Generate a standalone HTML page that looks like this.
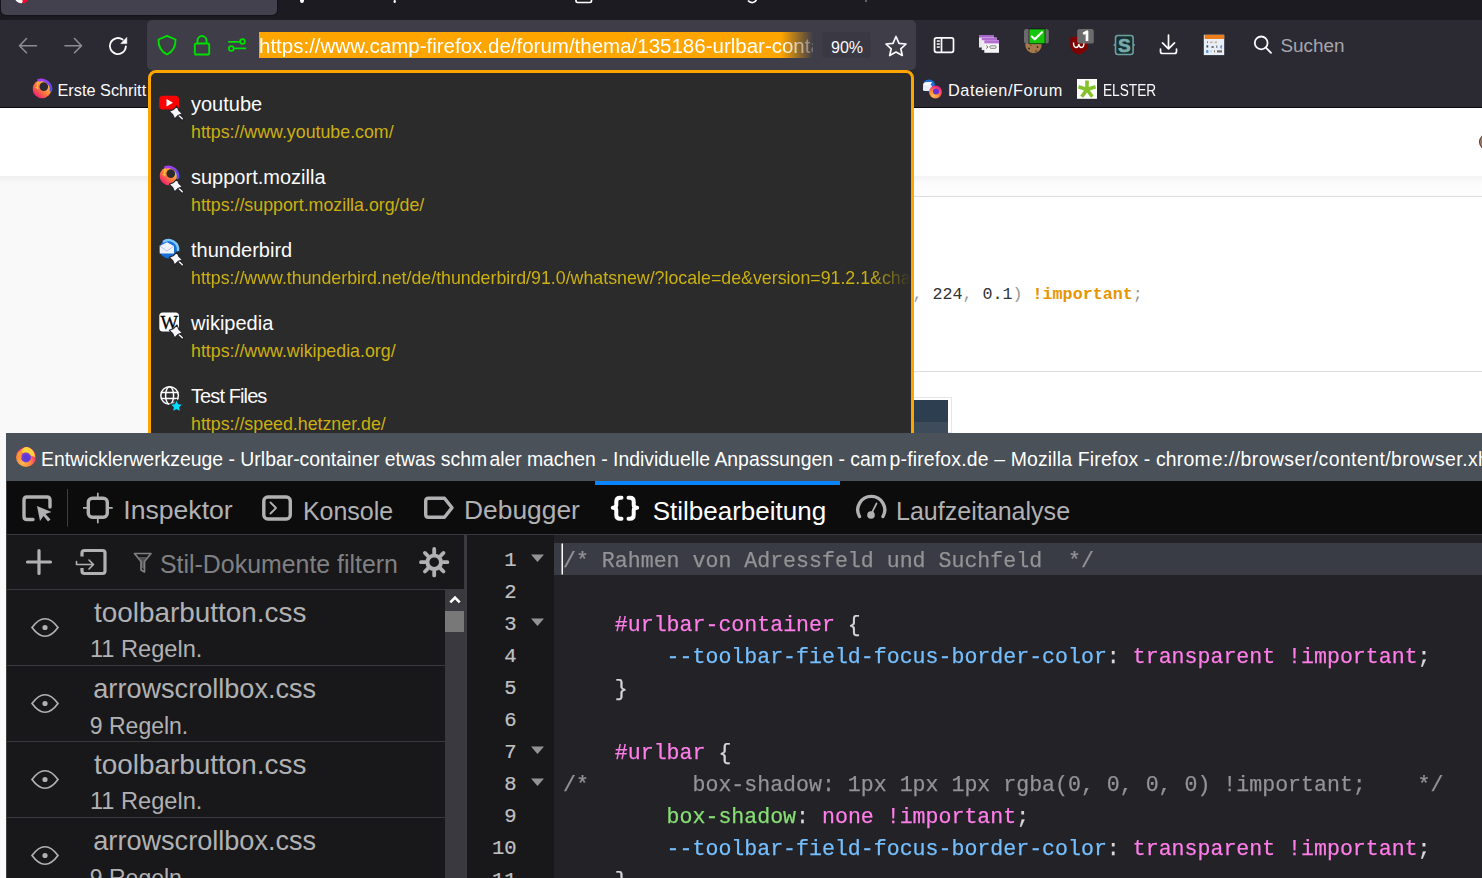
<!DOCTYPE html>
<html><head><meta charset="utf-8">
<style>
*{margin:0;padding:0;box-sizing:border-box}
html,body{width:1482px;height:878px;overflow:hidden;background:#fff;font-family:"Liberation Sans",sans-serif}
.a{position:absolute}
.t{position:absolute;white-space:pre;line-height:1}
.m{font-family:"Liberation Mono",monospace}
svg{position:absolute;overflow:visible}
</style></head><body>

<!-- TAB STRIP -->
<div class="a" style="left:0;top:0;width:1482px;height:20px;background:#1c1b22"></div>
<div class="a" style="left:1px;top:-10px;width:276px;height:25px;background:#42414d;border-radius:5px;box-shadow:0 0 1px 1px #141319"></div>


<svg style="left:0;top:0" width="1482" height="20" viewBox="0 0 1482 20">
 <ellipse cx="21.2" cy="-3.5" rx="6.6" ry="6.8" fill="#fff"/>
 <path d="M21.5 -10.3A6.6 6.8 0 0 1 21.5 3.3L23 2Q26 -3 23 -10Z" fill="#f00c2c"/>
 <path d="M21.2 -10.3A6.6 6.8 0 0 1 27.8 -3.5A6.6 6.8 0 0 1 21.2 3.3" fill="#f00c2c" transform="translate(1.3,0)"/>
 <ellipse cx="302" cy="0.5" rx="2" ry="2.6" fill="#fff"/>
 <rect x="393.6" y="0" width="2.2" height="3" rx="1" fill="#fff"/>
 <path d="M576 -3V1Q576 2.5 577.5 2.5H590Q591.5 2.5 591.5 1V-3" fill="none" stroke="#fff" stroke-width="1.7"/>
 <path d="M748 0.5Q750 3 753 2.5Q756 2 756.5 -1" fill="none" stroke="#fff" stroke-width="1.7"/>
 <rect x="865.5" y="0" width="1" height="2" fill="#aaa"/>
</svg>

<!-- NAV BAR -->
<div class="a" style="left:0;top:20px;width:1482px;height:88px;background:#2b2a33"></div>
<div class="a" style="left:0;top:107px;width:1482px;height:1px;background:#0b0b0f"></div>

<!-- PAGE -->
<div class="a" style="left:0;top:108px;width:1482px;height:68px;background:#fff"></div>
<div class="a" style="left:0;top:176px;width:1482px;height:702px;background:#f9f9f9"></div>
<div class="a" style="left:0;top:176px;width:1482px;height:8px;background:linear-gradient(#efefef,#f9f9f9)"></div>


<!-- PAGE CONTENT -->
<div class="a" style="left:600px;top:176px;width:882px;height:20px;background:linear-gradient(#f3f3f3,#f9f9f9 5px,#fdfdfd 10px)"></div><div class="a" style="left:600px;top:196px;width:882px;height:237px;background:#fff;border-top:1px solid #dcdce0"></div>
<div class="a" style="left:600px;top:371px;width:882px;height:1px;background:#dcdce0"></div>
<div class="a" style="left:600px;top:397px;width:352px;height:36px;background:#fff;border:1px solid #e6e6ee"></div>
<div class="a" style="left:600px;top:400px;width:348px;height:33px;background:linear-gradient(#2c3e50 0,#2c3e50 22px,#3d4b5b 22px)"></div>
<div class="a m" style="left:712.1px;top:284.6px;font-size:16.7px;line-height:20px;white-space:pre;color:#333">color: rgba(224<span style="color:#999">,</span> 224<span style="color:#999">,</span> 224<span style="color:#999">,</span> 0.1<span style="color:#999">)</span> <b style="color:#e69500">!important</b><span style="color:#999">;</span></div>
<div class="a" style="left:1478.5px;top:132.5px;width:19px;height:18px;border-radius:50%;background:#9a7a6a;border:1.5px solid #5a3a30"></div>

<!-- URL BAR -->
<div class="a" style="left:147px;top:20px;width:769px;height:50px;background:#3e3d48;border-radius:5px"></div>

<!-- POPUP -->
<div class="a" style="left:148px;top:70px;width:766px;height:380px;background:#2b2b2b;border:3px solid #ffa500;border-radius:8px"></div>


<!-- NAV ICONS -->
<svg style="left:0;top:0" width="1482" height="108" viewBox="0 0 1482 108">
 <g fill="none" stroke="#8c8c93" stroke-width="1.6" stroke-linecap="round" stroke-linejoin="round">
  <path d="M19.5 45.8H36.5M26.5 38.5L19.5 45.8L26.5 52.8"/>
  <path d="M65 45.8H81.5M74.5 38.5L81.5 45.8L74.5 52.8"/>
 </g>
 <g fill="none" stroke="#fbfbfe" stroke-width="1.8" stroke-linecap="round">
  <path d="M125.85 46.5A8 8 0 1 1 122.6 39.6"/>
 </g>
 <path d="M126.8 37.4L126.8 43.6L120.8 43.6Z" fill="#fbfbfe" stroke="#fbfbfe" stroke-width="0.6" stroke-linejoin="round"/>
 <g fill="none" stroke="#00e000" stroke-width="1.9" stroke-linejoin="round">
  <path d="M167 35.8L158.5 39.5C158.3 46 161 51.5 167 54.5C173 51.5 175.7 46 175.5 39.5Z"/>
  <path d="M197.5 43V40.5A4.5 4.5 0 0 1 206.5 40.5V43"/>
  <rect x="194.8" y="43.5" width="14.4" height="11" rx="1.6"/>
 </g>
 <g fill="none" stroke="#00e000" stroke-width="1.7" stroke-linecap="round">
  <path d="M228.8 41.8H239M234.3 48.3H245.5"/>
  <circle cx="242.5" cy="41.5" r="2.4"/>
  <circle cx="231.3" cy="48.5" r="2.4"/>
 </g>
</svg>


<!-- URL TEXT -->
<div class="a" style="left:259px;top:32px;width:554px;height:26px;background:linear-gradient(90deg,#ffa500 0,#ffa500 522px,rgba(255,165,0,0) 554px)"></div>
<div class="t" style="left:259px;top:36.2px;font-size:20.5px;color:#fff;width:554px;overflow:hidden;-webkit-mask-image:linear-gradient(90deg,#000 0,#000 522px,rgba(0,0,0,.25) 554px)">https://www.camp-firefox.de/forum/thema/135186-urlbar-container</div>
<div class="a" style="left:822px;top:32px;width:49px;height:26px;background:#393843;border-radius:4px"></div>
<div class="t" style="left:831px;top:39.5px;font-size:16px;color:#fbfbfe">90%</div>
<svg style="left:0;top:0" width="1482" height="108" viewBox="0 0 1482 108">
 <path d="M896 36.5L899 43.3L906 44L900.8 48.8L902.3 55.5L896 52L889.7 55.5L891.2 48.8L886 44L893 43.3Z" fill="none" stroke="#fbfbfe" stroke-width="1.7" stroke-linejoin="round"/>
 <g fill="none" stroke="#fbfbfe" stroke-width="1.7">
  <rect x="934.5" y="37.8" width="19" height="14.5" rx="2"/>
  <path d="M941.5 38V52"/>
 </g>
 <g fill="#fbfbfe"><rect x="936.8" y="40.3" width="3" height="1.5"/><rect x="936.8" y="43.3" width="3" height="1.5"/><rect x="936.8" y="46.3" width="3" height="1.5"/></g>
 <!-- download -->
 <g fill="none" stroke="#fbfbfe" stroke-width="1.7" stroke-linecap="round" stroke-linejoin="round">
  <path d="M1168.5 35V48.5M1162.5 42.8L1168.5 48.8L1174.5 42.8"/>
  <path d="M1160.5 49V51.5Q1160.5 53.5 1162.5 53.5H1174.5Q1176.5 53.5 1176.5 51.5V49"/>
 </g>
 <!-- search -->
 <g fill="none" stroke="#fbfbfe" stroke-width="1.8" stroke-linecap="round">
  <circle cx="1261.2" cy="42.9" r="6.4"/>
  <path d="M1265.9 47.6L1271 52.8"/>
 </g>
</svg>
<div class="t" style="left:1280.5px;top:37.3px;font-size:18.9px;color:#a6a6ac">Suchen</div>


<!-- EXTENSION ICONS -->
<svg style="left:0;top:0" width="1482" height="108" viewBox="0 0 1482 108">
 <defs>
  <radialGradient id="ffg" cx="0.35" cy="0.75" r="0.8"><stop offset="0" stop-color="#ffbd4f"/><stop offset="0.45" stop-color="#ff8a3d"/><stop offset="0.8" stop-color="#f5366e"/><stop offset="1" stop-color="#e31587"/></radialGradient>
  <linearGradient id="ffl" x1="0.15" y1="0.9" x2="0.85" y2="0.1"><stop offset="0" stop-color="#f01a76"/><stop offset="0.45" stop-color="#ff7a3d"/><stop offset="1" stop-color="#ffd93b"/></linearGradient><linearGradient id="ffp2" x1="0" y1="0" x2="0.3" y2="1"><stop offset="0" stop-color="#a83df5"/><stop offset="1" stop-color="#4d4cf0"/></linearGradient>
  <linearGradient id="ffp" x1="0" y1="0" x2="1" y2="1"><stop offset="0" stop-color="#9059ff"/><stop offset="1" stop-color="#592acb"/></linearGradient>
 </defs>
 <!-- windows -->
 <g>
  <rect x="979" y="35" width="15" height="12.5" fill="#e8e8e8"/><rect x="979" y="35" width="15" height="2.6" fill="#a865c9"/>
  <rect x="981.7" y="37.6" width="15" height="12.5" fill="#ececec"/><rect x="981.7" y="37.6" width="15" height="2.6" fill="#b06ad0"/>
  <rect x="984.3" y="40.2" width="14.7" height="12.6" fill="#f6f6f6"/><rect x="984.3" y="40.2" width="14.7" height="3.2" fill="#b36fd3"/>
  <path d="M986.2 45.5L988 47L986.2 48.5" fill="none" stroke="#666" stroke-width="0.9"/><rect x="990" y="45.8" width="6" height="2.5" rx="0.8" fill="none" stroke="#777" stroke-width="0.9"/>
 </g>
 <!-- cookie -->
 <circle cx="1033.5" cy="45" r="8.2" fill="#a5794c"/>
 <g fill="#3b2a1a"><circle cx="1029" cy="48.5" r="1"/><circle cx="1037.5" cy="47" r="0.9"/><circle cx="1036" cy="51" r="0.8"/><circle cx="1031" cy="45.5" r="0.6"/></g>
 <rect x="1024" y="29" width="24.8" height="14.6" rx="2.5" fill="#6b6b6b"/>
 <rect x="1029" y="29" width="16" height="14.8" fill="#16c60c" stroke="#000" stroke-width="0.6"/>
 <path d="M1031.8 36.5L1034.8 39.3L1042 32.3" fill="none" stroke="#fff" stroke-width="2.2" stroke-linecap="round" stroke-linejoin="round"/>
 <!-- ublock -->
 <path d="M1070.3 37.5L1078.8 36.3L1087.5 37.5V46Q1087.5 51.5 1078.8 54.8Q1070.3 51.5 1070.3 46Z" fill="#800000"/>
 <path d="M1073.5 42.5Q1073.5 47.5 1076.2 47.5Q1078.5 47.5 1078.8 44Q1079 47.5 1081.5 47.5Q1084 47.5 1084 42.5" fill="none" stroke="#fff" stroke-width="1.4"/>
 <rect x="1077.2" y="29" width="16.6" height="14.6" rx="2.2" fill="#6b6b6b"/>
 <path d="M1083.2 33.8L1087 31.6V41" fill="none" stroke="#fff" stroke-width="2.7" stroke-linejoin="round"/>
 <!-- stylus -->
 <rect x="1115.5" y="35.5" width="17.6" height="19" rx="2.5" fill="#17302f" stroke="#6f9ea0" stroke-width="1.6"/>
 <circle cx="1114.5" cy="45" r="1" fill="#6f9ea0"/><circle cx="1134" cy="45" r="1" fill="#6f9ea0"/>
 <text x="1124.3" y="52.3" font-family="Liberation Sans" font-weight="bold" font-size="19" fill="#79a9ad" text-anchor="middle" stroke="#79a9ad" stroke-width="0.6">S</text>
 <!-- grid calendar -->
 <rect x="1203.8" y="34.8" width="20.4" height="20.3" fill="#e6effa"/>
 <rect x="1204.6" y="34.8" width="19.6" height="4.2" fill="#ec7d1c"/>
 <g fill="#c9a27a" opacity=".8"><rect x="1210" y="41.5" width="2.6" height="1.6"/><rect x="1214.5" y="41.5" width="2.6" height="1.6"/></g>
 <rect x="1207" y="41.3" width="1" height="1.8" fill="#4b7fd6"/>
 <g fill="#444"><rect x="1206.5" y="45.3" width="1.7" height="2.2"/><rect x="1211.5" y="46.3" width="2.2" height="1.4"/></g>
 <rect x="1216" y="45.5" width="1.4" height="2.4" fill="#888"/>
 <path d="M1222 45.5Q1220 46.5 1221.5 48.5" fill="none" stroke="#3d73c9" stroke-width="1.2"/>
 <rect x="1206.2" y="50" width="2.2" height="3" fill="#5b95d6"/><rect x="1210" y="50.5" width="2" height="1.6" fill="#b8d4f0"/>
 <rect x="1214" y="50.3" width="1" height="2" fill="#8a6b4a"/><rect x="1217" y="50.3" width="5" height="2.2" fill="#7a6a5a"/>

 <!-- bookmark bar icons -->
 <g transform="translate(42,89)"><circle r="9.3" fill="url(#ffl)"/><path d="M-4.5 -8.2A9.6 9.6 0 0 1 8.8 2.5" fill="none" stroke="url(#ffp2)" stroke-width="2.6"/><circle cx="1.8" cy="-2.4" r="4.3" fill="#2b2a33"/><path d="M-3.2 -7.3Q-5.5 -4 -4 0Q-5.5 -2.5 -6.3 -1" fill="none" stroke="#ffbf40" stroke-width="1.2"/></g>
 <g transform="translate(932,89)">
  <circle cx="-3" cy="-3.5" r="6" fill="#1d6fd9"/><path d="M-9 -3.5Q-9 -7 -5 -7H0L-3 -1Z" fill="#fff"/>
  <rect x="-9" y="-4" width="9" height="6" rx="1.5" fill="#e8eefa"/>
  <circle cx="3.5" cy="3" r="6.5" fill="url(#ffg)"/>
  <circle cx="4" cy="2.5" r="3" fill="#6a2fd6"/>
 </g>
 <rect x="1077" y="79" width="20" height="19.8" fill="#fff"/>
 <path d="M1087.0 89.5L1087.00 80.50M1087.0 89.5L1095.56 86.72M1087.0 89.5L1092.29 96.78M1087.0 89.5L1081.71 96.78M1087.0 89.5L1078.44 86.72" stroke="#84c22b" stroke-width="3.6"/>
</svg>
<div class="t" style="left:57.5px;top:82px;font-size:16.3px;color:#fbfbfe;width:90px;overflow:hidden">Erste Schritt</div>
<div class="t" style="left:948px;top:82px;font-size:16.3px;color:#fbfbfe;letter-spacing:0.55px">Dateien/Forum</div>
<div class="t" style="left:1103px;top:82px;font-size:16.3px;color:#fbfbfe;transform:scaleX(.84);transform-origin:0 0">ELSTER</div>


<!-- POPUP ROWS -->
<div class="t" style="left:191px;top:93.57px;font-size:20px;color:#fbfbfe">youtube</div>
<div class="t" style="left:191px;top:123.83px;font-size:17.8px;color:#cbb011;">https://www.youtube.com/</div>
<div class="t" style="left:191px;top:166.57px;font-size:20px;color:#fbfbfe">support.mozilla</div>
<div class="t" style="left:191px;top:196.83px;font-size:17.8px;color:#cbb011;">https://support.mozilla.org/de/</div>
<div class="t" style="left:191px;top:239.57px;font-size:20px;color:#fbfbfe">thunderbird</div>
<div class="t" style="left:191px;top:269.83px;font-size:17.8px;color:#cbb011;width:720px;overflow:hidden;-webkit-mask-image:linear-gradient(90deg,#000 0,#000 680px,rgba(0,0,0,0) 720px);">https://www.thunderbird.net/de/thunderbird/91.0/whatsnew/?locale=de&amp;version=91.2.1&amp;channel=release</div>
<div class="t" style="left:191px;top:312.57px;font-size:20px;color:#fbfbfe">wikipedia</div>
<div class="t" style="left:191px;top:342.83px;font-size:17.8px;color:#cbb011;">https://www.wikipedia.org/</div>
<div class="t" style="left:191px;top:385.57px;font-size:20px;color:#fbfbfe;letter-spacing:-0.9px">Test Files</div>
<div class="t" style="left:191px;top:415.83px;font-size:17.8px;color:#cbb011;">https://speed.hetzner.de/</div>
<svg style="left:0;top:0" width="1482" height="440" viewBox="0 0 1482 440">
<rect x="159.2" y="95.8" width="19.8" height="13.8" rx="3.5" fill="#f00"/><path d="M166.5 99L173 102.7L166.5 106.4Z" fill="#fff"/>
<g><path d="M176.8 113.5L182.8 119.3" stroke="#23232a" stroke-width="3" stroke-linecap="round"/><path d="M176.8 113.5L182.3 118.8" stroke="#fff" stroke-width="1.3" stroke-linecap="round"/><path d="M176.95 106.00L178.83 110.38L182.30 113.65L177.92 115.53L174.65 119.00L172.77 114.62L169.30 111.35L173.68 109.47Z" fill="#f7f7fb" stroke="#23232a" stroke-width="1.1" stroke-linejoin="round"/></g>
<g transform="translate(169,176)"><circle r="9.3" fill="url(#ffl)"/><path d="M-4.5 -8.2A9.6 9.6 0 0 1 8.8 2.5" fill="none" stroke="url(#ffp2)" stroke-width="2.6"/><circle cx="1.8" cy="-2.4" r="4.3" fill="#2b2b2b"/><path d="M-3.2 -7.3Q-5.5 -4 -4 0Q-5.5 -2.5 -6.3 -1" fill="none" stroke="#ffbf40" stroke-width="1.2"/></g>
<g><path d="M176.8 186.5L182.8 192.3" stroke="#23232a" stroke-width="3" stroke-linecap="round"/><path d="M176.8 186.5L182.3 191.8" stroke="#fff" stroke-width="1.3" stroke-linecap="round"/><path d="M176.95 179.00L178.83 183.38L182.30 186.65L177.92 188.53L174.65 192.00L172.77 187.62L169.30 184.35L173.68 182.47Z" fill="#f7f7fb" stroke="#23232a" stroke-width="1.1" stroke-linejoin="round"/></g>
<g transform="translate(169,249)"><circle r="9.5" fill="#1a6fd6"/><path d="M-6 -7A9.5 9.5 0 0 1 9 2" fill="none" stroke="#7dc9ff" stroke-width="2.5"/><path d="M-9.3 -3L-2 -6.8L5 -3V4.5H-9.3Z" fill="#eef2fa"/><path d="M-9.3 -3L-2 2L5 -3" fill="none" stroke="#b9c6dc" stroke-width="1"/></g>
<g><path d="M176.8 259.5L182.8 265.3" stroke="#23232a" stroke-width="3" stroke-linecap="round"/><path d="M176.8 259.5L182.3 264.8" stroke="#fff" stroke-width="1.3" stroke-linecap="round"/><path d="M176.95 252.00L178.83 256.38L182.30 259.65L177.92 261.53L174.65 265.00L172.77 260.62L169.30 257.35L173.68 255.47Z" fill="#f7f7fb" stroke="#23232a" stroke-width="1.1" stroke-linejoin="round"/></g>
<rect x="159.3" y="312.5" width="19.7" height="19" rx="3.5" fill="#fff"/><text x="169.2" y="328.5" font-family="Liberation Serif" font-size="18.5" fill="#000" text-anchor="middle" stroke="#000" stroke-width="0.3">W</text>
<g><path d="M176.8 332.5L182.8 338.3" stroke="#23232a" stroke-width="3" stroke-linecap="round"/><path d="M176.8 332.5L182.3 337.8" stroke="#fff" stroke-width="1.3" stroke-linecap="round"/><path d="M176.95 325.00L178.83 329.38L182.30 332.65L177.92 334.53L174.65 338.00L172.77 333.62L169.30 330.35L173.68 328.47Z" fill="#f7f7fb" stroke="#23232a" stroke-width="1.1" stroke-linejoin="round"/></g>
<g fill="none" stroke="#fbfbfe" stroke-width="1.5"><circle cx="169.6" cy="395.5" r="8.8"/><ellipse cx="169.6" cy="395.5" rx="4" ry="8.8"/><path d="M160.8 392.5H178.4M160.8 398.5H178.4"/></g>
<path d="M176.5 399.5L178.6 403.7L183.2 404.3L179.8 407.5L180.7 412L176.5 409.8L172.3 412L173.2 407.5L169.8 404.3L174.4 403.7Z" fill="#00ddff" stroke="#2b2b2b" stroke-width="1.3" stroke-linejoin="round"/>
</svg>

<!-- DEVTOOLS -->
<div class="a" style="left:6px;top:433px;width:1476px;height:445px;background:#232327"></div>
<div class="a" style="left:6px;top:433px;width:1476px;height:48px;background:#4a5158"></div>
<div class="a" style="left:6px;top:481px;width:1476px;height:53px;background:#0c0c0d"></div>
<div class="a" style="left:6px;top:534px;width:1476px;height:1px;background:#38383d"></div>
<div class="a" style="left:6px;top:535px;width:458px;height:343px;background:#18181a"></div>
<div class="a" style="left:464px;top:535px;width:3px;height:343px;background:#3a3a40"></div>
<div class="a" style="left:467px;top:535px;width:87px;height:343px;background:#18181a"></div>


<!-- DEVTOOLS CONTENT -->
<svg style="left:0;top:0" width="1482" height="878" viewBox="0 0 1482 878">
 <!-- title firefox logo -->
 <g transform="translate(26,457)">
  <circle r="10" fill="url(#ffg)"/>
  <path d="M-6 -5Q-2 -12 4 -9Q9 -6 9 0" fill="#ffd43a"/>
  <circle cx="0" cy="0.5" r="5" fill="#7b3bd6"/>
  <circle cx="0.3" cy="1" r="3.2" fill="#5a3bd6"/>
  <path d="M-9 -1Q-8 -7 -3 -6Q-6 -3 -4 1Z" fill="#ff9a2e"/>
 </g>
 <!-- picker -->
 <g fill="none" stroke="#b1b1b3" stroke-width="3.4" stroke-linejoin="round" stroke-linecap="round">
  <path d="M33 519.5H27Q24 519.5 24 516.5V500Q24 497 27 497H47Q50 497 50 500V507"/>
 </g>
 <path d="M37 506L51.5 512L45.5 514L50.5 519.5L48 521.5L43.5 516L40 521Z" fill="#b1b1b3"/>
 <rect x="67" y="489" width="1" height="37.5" fill="#3d3d42"/>
 <!-- inspector -->
 <g fill="none" stroke="#b1b1b3" stroke-width="3.4" stroke-linecap="round">
  <rect x="88.3" y="498.3" width="19" height="19" rx="4"/>
 </g>
 <g stroke="#b1b1b3" stroke-width="1.7"><path d="M97.8 492.7V498M97.8 518V523.3M83 507.8H88.5M107.5 507.8H112.7"/></g>
 <!-- console -->
 <rect x="263.8" y="497" width="26.5" height="22" rx="4" fill="none" stroke="#b1b1b3" stroke-width="3.4"/>
 <path d="M270.5 502.5L276 508L270.5 513.5" fill="none" stroke="#b1b1b3" stroke-width="1.8" stroke-linecap="round" stroke-linejoin="round"/>
 <!-- debugger -->
 <path d="M428.5 498.2H444.5L452 507.7L444.5 517.2H428.5Q425.7 517.2 425.7 514.4V501Q425.7 498.2 428.5 498.2Z" fill="none" stroke="#b1b1b3" stroke-width="3.4" stroke-linejoin="round"/>
 <!-- tab indicator -->
 <rect x="595" y="481" width="245" height="4" fill="#0a84ff"/>

 <!-- braces -->
 <g fill="none" stroke="#fff" stroke-width="4" stroke-linecap="round" stroke-linejoin="round">
  <path d="M621.5 497.8H620Q616.3 497.8 616.3 501.5V505Q616.3 507.8 612.8 507.8Q616.3 507.8 616.3 510.6V515Q616.3 518.8 620 518.8H621.5"/>
  <path d="M628.5 497.8H630Q633.7 497.8 633.7 501.5V505Q633.7 507.8 637.2 507.8Q633.7 507.8 633.7 510.6V515Q633.7 518.8 630 518.8H628.5"/>
 </g>
 <!-- gauge -->
 <path d="M859.5 516.5A13.5 13.5 0 1 1 883 516.5" fill="none" stroke="#b1b1b3" stroke-width="3.4" stroke-linecap="round"/>
 <path d="M871 514.5L876.5 503.5" stroke="#b1b1b3" stroke-width="1.7" stroke-linecap="round"/>
 <circle cx="871" cy="515" r="3.8" fill="#b1b1b3"/>
 <!-- side toolbar icons -->
 <g stroke="#b1b1b3" stroke-width="3.2" stroke-linecap="round"><path d="M39 550.5V573.5M27.5 562H50.5"/></g>
 <path d="M82 556.5V553Q82 550.5 84.5 550.5H102.5Q105 550.5 105 553V571Q105 573.5 102.5 573.5H84.5Q82 573.5 82 571V568" fill="none" stroke="#b1b1b3" stroke-width="3.2"/>
 <path d="M76.5 561.5V564.5H93M89 560L93.5 564.5L89 569" fill="none" stroke="#b1b1b3" stroke-width="1.6" stroke-linecap="round" stroke-linejoin="round"/>
 <path d="M134.5 553.5H151L144.5 561.5V572L141 570V561.5Z" fill="none" stroke="#808083" stroke-width="1.7" stroke-linejoin="round"/>
 <path d="M138.5 557H147L144 561V569L141 567.5V561Z" fill="#808083" opacity=".55"/>
 <!-- gear -->
 <g transform="translate(434.2,562.2)">
  <g stroke="#b1b1b3" stroke-width="3.8" stroke-linecap="round">
   <path d="M0 -13.2V-9M0 9V13.2M-13.2 0H-9M9 0H13.2M-9.3 -9.3L-6.4 -6.4M6.4 6.4L9.3 9.3M-9.3 9.3L-6.4 6.4M6.4 -6.4L9.3 -9.3"/>
  </g>
  <circle r="6.8" fill="none" stroke="#b1b1b3" stroke-width="4"/>
 </g>
 <!-- list separators -->
 <rect x="6" y="589" width="458" height="1" fill="#38383d"/>
 <rect x="6" y="665" width="439" height="1" fill="#38383d"/>
 <rect x="6" y="741" width="439" height="1" fill="#38383d"/>
 <rect x="6" y="817" width="439" height="1" fill="#38383d"/>
 <!-- scrollbar -->
 <rect x="445" y="590" width="19" height="288" fill="#3a393f"/>
 <rect x="445" y="611" width="19" height="21" fill="#787879"/>
 <path d="M450.3 602.3L455 597.6L459.7 602.3" fill="none" stroke="#fff" stroke-width="2.6"/>
 <!-- eyes -->
 <g fill="none" stroke="#b1b1b3" stroke-width="1.7">
  <path d="M32 627.5Q45 610 58 627.5Q45 645 32 627.5Z"/>
  <path d="M32 703.5Q45 686 58 703.5Q45 721 32 703.5Z"/>
  <path d="M32 779.5Q45 762 58 779.5Q45 797 32 779.5Z"/>
  <path d="M32 855.5Q45 838 58 855.5Q45 873 32 855.5Z"/>
 </g>
 <g fill="#b1b1b3"><circle cx="45" cy="627.5" r="2.6"/><circle cx="45" cy="703.5" r="2.6"/><circle cx="45" cy="779.5" r="2.6"/><circle cx="45" cy="855.5" r="2.6"/></g>
 <!-- active line -->
 <rect x="554" y="543" width="928" height="32" fill="#393c44"/>
 <rect x="561.5" y="543.5" width="1.5" height="31" fill="#fff"/>
 <!-- fold markers -->
 <g fill="#939395">
  <path d="M531 554.5H544L537.5 562Z"/>
  <path d="M531 618.5H544L537.5 626Z"/>
  <path d="M531 746.5H544L537.5 754Z"/>
  <path d="M531 778.5H544L537.5 786Z"/>
 </g>
</svg>
<div class="t" style="left:41.0px;top:449.6px;font-size:19.4px;color:#fff">Entwicklerwerkzeuge - Urlbar-container etwas schm</div><div class="t" style="left:489.4px;top:449.6px;font-size:19.4px;color:#fff">aler m</div><div class="t" style="left:543.0px;top:449.6px;font-size:19.4px;color:#fff">achen - Individuelle Anpassungen - cam</div><div class="t" style="left:889.6px;top:449.6px;font-size:19.4px;color:#fff;letter-spacing:0.17px">p-firefox.de – Mozilla Firefox - chrom</div><div class="t" style="left:1211.8px;top:449.6px;font-size:19.4px;color:#fff;letter-spacing:0.45px">e://browser/content/browser.xhtml</div>
<div class="t" style="left:123.3px;top:497.2px;font-size:26.6px;color:#b1b1b3">Inspektor</div>
<div class="t" style="left:302.9px;top:498.5px;font-size:25px;color:#b1b1b3">Konsole</div>
<div class="t" style="left:464px;top:497.4px;font-size:26.4px;color:#b1b1b3">Debugger</div>
<div class="t" style="left:652.7px;top:497.5px;font-size:26px;color:#fff">Stilbearbeitung</div>
<div class="t" style="left:896px;top:498.5px;font-size:25.05px;color:#b1b1b3">Laufzeitanalyse</div>
<div class="t" style="left:160px;top:551.6px;font-size:24.9px;color:#808083">Stil-Dokumente filtern</div>
<div class="t" style="left:94px;top:598.7px;font-size:27.9px;color:#b1b1b3">toolbarbutton.css</div>
<div class="t" style="left:90px;top:638.2px;font-size:23.6px;color:#b1b1b3">11 Regeln.</div>
<div class="t" style="left:93.3px;top:675.3px;font-size:27.1px;color:#b1b1b3">arrowscrollbox.css</div>
<div class="t" style="left:89.8px;top:714.7px;font-size:23px;color:#b1b1b3">9 Regeln.</div>
<div class="t" style="left:94px;top:750.7px;font-size:27.9px;color:#b1b1b3">toolbarbutton.css</div>
<div class="t" style="left:90px;top:790.2px;font-size:23.6px;color:#b1b1b3">11 Regeln.</div>
<div class="t" style="left:93.3px;top:827.3px;font-size:27.1px;color:#b1b1b3">arrowscrollbox.css</div>
<div class="t" style="left:89.8px;top:866.7px;font-size:23px;color:#b1b1b3">9 Regeln.</div>
<div class="a m" style="left:467px;top:544.65px;width:49.5px;font-size:20.5px;line-height:32px;color:#c0c0c2;text-align:right;white-space:pre;-webkit-text-stroke:0.2px">1
2
3
4
5
6
7
8
9
10
11</div>
<div class="a m" style="left:563px;top:545.06px;font-size:22.3px;line-height:32px;color:#d7d7db;white-space:pre;transform:scaleX(0.96771);transform-origin:0 0;-webkit-text-stroke:0.25px"><span style="color:#939395">/* Rahmen von Adressfeld und Suchfeld  */</span>

    <span style="color:#ff7de9">#urlbar-container</span> {
        <span style="color:#75bfff">--toolbar-field-focus-border-color</span>: <span style="color:#ff7de9">transparent !important</span>;
    }

    <span style="color:#ff7de9">#urlbar</span> {
<span style="color:#939395">/*        box-shadow: 1px 1px 1px rgba(0, 0, 0, 0) !important;    */</span>
        <span style="color:#86de74">box-shadow</span>: <span style="color:#ff7de9">none !important</span>;
        <span style="color:#75bfff">--toolbar-field-focus-border-color</span>: <span style="color:#ff7de9">transparent !important</span>;
    }</div>

<div class="a" style="left:6px;top:481px;width:1px;height:397px;background:#3c3c42"></div>
</body></html>
